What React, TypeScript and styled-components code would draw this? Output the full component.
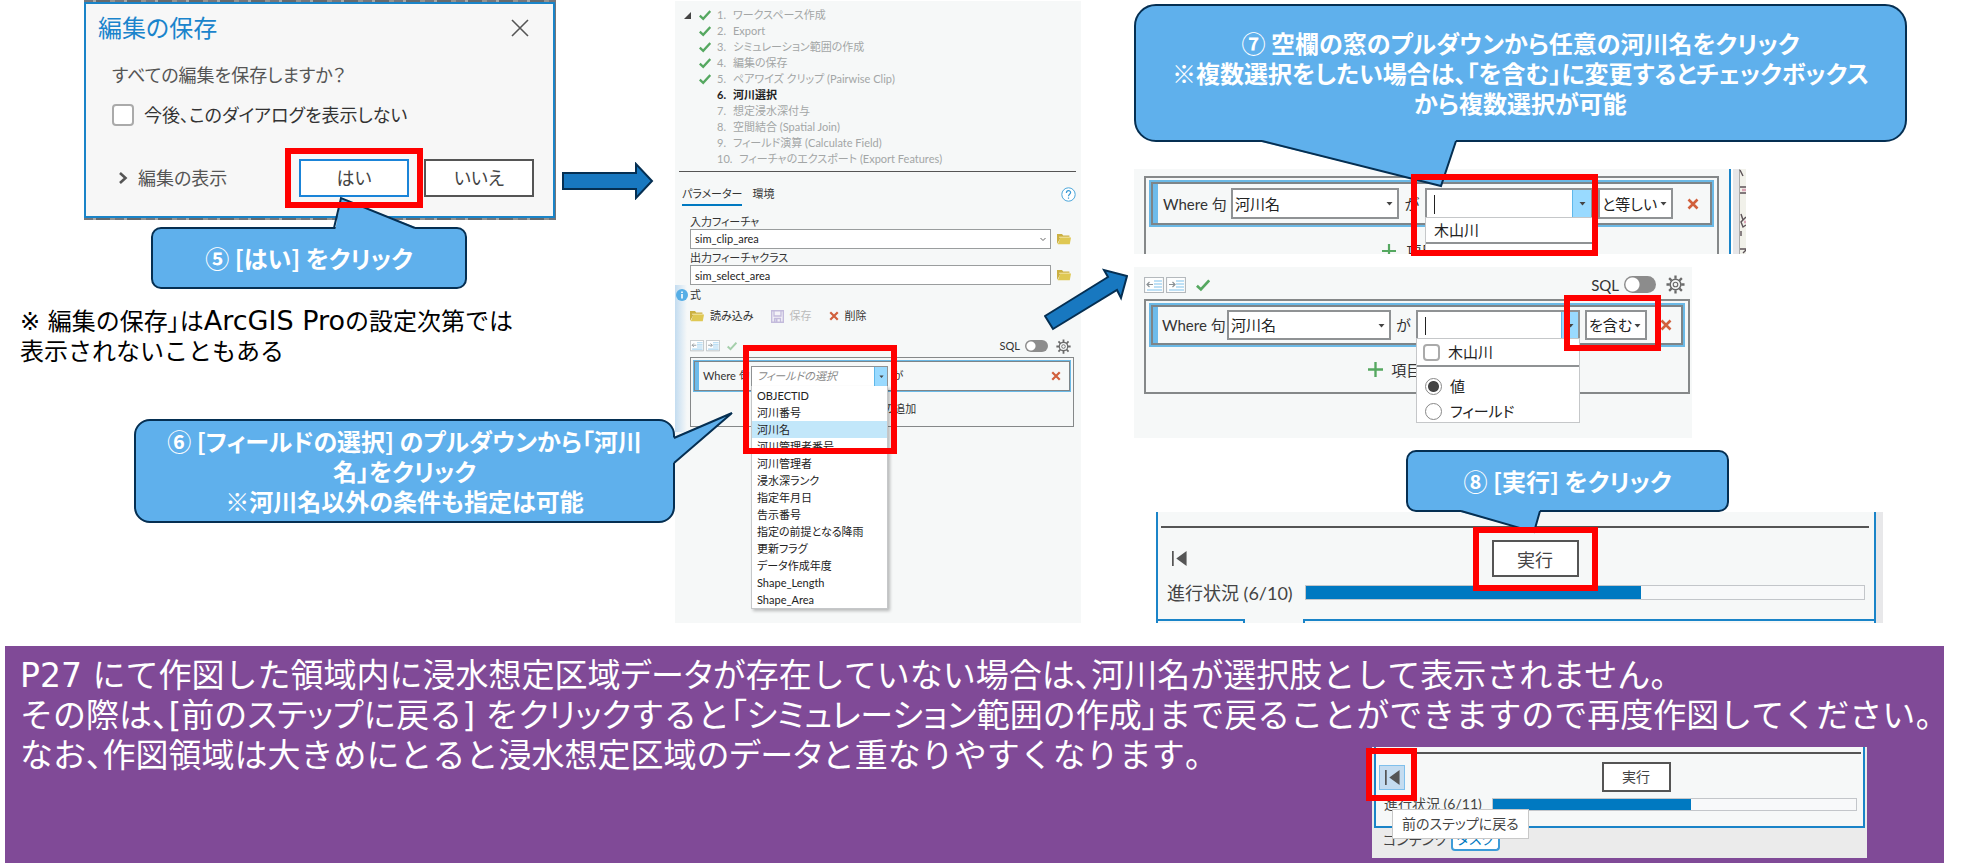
import React from "react";
import styled, { createGlobalStyle, css } from "styled-components";

const color = {
  callout: "#5fb0ec",
  navy: "#052f52",
  arrow: "#1878c0",
  red: "#ff0000",
  accent: "#0079c1",
  edge: "#1a84c8",
  panel: "#f6f8f8",
  purple: "#804a97",
  orange: "#d1603d",
  green: "#55a860",
};

const GlobalStyle = createGlobalStyle`
  *, *::before, *::after { box-sizing: border-box; }
  body {
    margin: 0;
    background: #fff;
    color: #333;
    font-family: Lato, "Noto Sans CJK JP", sans-serif;
    font-feature-settings: "palt";
  }
  button, input, select { font: inherit; font-feature-settings: inherit; color: inherit; margin: 0; border-radius: 0; }
  p, ol, ul, h2 { margin: 0; padding: 0; font-weight: 400; }
  ol, ul { list-style: none; }
`;

/* ---------- slide ---------- */

const Slide = styled.main`
  display: flex;
  flex-direction: column;
  min-height: 100vh;
  overflow: hidden;
`;

const Columns = styled.div`
  display: grid;
  grid-template-columns: minmax(0, 675fr) minmax(0, 406fr) minmax(0, 880fr);
  margin-bottom: 23px;
`;

const LeftColumn = styled.section`
  display: flex;
  flex-direction: column;
`;

const RightColumn = styled.section`
  display: flex;
  flex-direction: column;
  padding: 4px 0 0 53px;
`;

/* ---------- annotations ---------- */

const Highlight = styled.span<{ $inset: string }>`
  position: absolute;
  inset: ${(p) => p.$inset};
  border: 6px solid ${color.red};
  z-index: 3;
  pointer-events: none;
`;

const CalloutBox = styled.div<{ $pad: number; $radius: number; $margin: string }>`
  position: relative;
  z-index: 2;
  margin: ${(p) => p.$margin};
  padding: ${(p) => p.$pad}px 8px;
  border: 2px solid ${color.navy};
  border-radius: ${(p) => p.$radius}px;
  background: ${color.callout};
  color: #fff;
  font-family: "Noto Sans CJK JP", sans-serif;
  font-size: 24px;
  font-weight: 700;
  line-height: 30px;
  text-align: center;
  white-space: nowrap;
`;

const TailSvg = styled.svg<{ $top: number; $left?: number; $right?: number }>`
  position: absolute;
  top: ${(p) => p.$top}px;
  ${(p) => (p.$left !== undefined ? `left: ${p.$left}px;` : `right: ${p.$right}px;`)}
  overflow: visible;
`;

interface TailProps {
  width: number;
  height: number;
  top: number;
  left?: number;
  right?: number;
  fill: string;
  edge: string;
}

const Tail = ({ width, height, top, left, right, fill, edge }: TailProps) => (
  <TailSvg width={width} height={height} $top={top} $left={left} $right={right} aria-hidden>
    <polygon points={fill} fill={color.callout} />
    <polyline points={edge} fill="none" stroke={color.navy} strokeWidth="2" />
  </TailSvg>
);

const RightArrow = styled.svg`
  flex: none;
  margin: 162px 0 0 6px;
`;

const DiagonalArrow = styled.svg`
  position: absolute;
  right: -47px;
  top: 266px;
  z-index: 2;
`;

/* ---------- prose: full-width kana, proportional katakana and punctuation ---------- */

const Full = styled.span`
  font-feature-settings: "palt" 0;
`;

const Tight = styled.span`
  font-feature-settings: "palt";
`;

const Prose = ({ children }: { children: string }) => (
  <Full>
    {children
      .split(/([ァ-ヿ、。「」]+)/)
      .map((part, i) => (i % 2 ? <Tight key={i}>{part}</Tight> : part))}
  </Full>
);

/* ---------- icons ---------- */

const Check = ({ size = 12, tone = color.green }: { size?: number; tone?: string }) => (
  <svg width={size} height={size} viewBox="0 0 12 12" aria-hidden>
    <path d="M.8 6.6 4.2 9.8 11.3 2" fill="none" stroke={tone} strokeWidth="2.3" />
  </svg>
);

const Cross = ({ size }: { size: number }) => (
  <svg width={size} height={size} viewBox="0 0 12 12" aria-hidden>
    <path d="M1.5 1.5 10.5 10.5M10.5 1.5 1.5 10.5" stroke={color.orange} strokeWidth="2.6" />
  </svg>
);

const Plus = ({ size }: { size: number }) => (
  <svg width={size} height={size} viewBox="0 0 14 14" aria-hidden>
    <path d="M7 0V14M0 7H14" stroke={color.green} strokeWidth="2.2" />
  </svg>
);

const Folder = () => (
  <svg width="14" height="12" viewBox="0 0 14 12" aria-hidden>
    <path d="M0 11V1H5L6.2 2.5H12.4V5H3.5Z" fill="#cbb042" />
    <path d="M.8 11.3 3.4 4.6H14L12.8 11.3Z" fill="#dfc853" />
    <path d="M2 4.2H12.4" stroke="#fff6c8" strokeWidth=".8" />
  </svg>
);

const Floppy = () => (
  <svg width="13" height="13" viewBox="0 0 13 13" aria-hidden>
    <path d="M.7.7H12.3V12.3H.7Z" fill="#f4f2f8" stroke="#c3bbdc" strokeWidth="1.4" />
    <path d="M3 1V6H10V1M3.5 12V8.5H9.5V12" fill="none" stroke="#c3bbdc" strokeWidth="1.3" />
    <path d="M4.5 9H6.5V12H4.5Z" fill="#c3bbdc" />
  </svg>
);

const Gear = ({ size }: { size: number }) => (
  <svg width={size} height={size} viewBox="0 0 20 20" aria-hidden>
    <g stroke="#6a6a6a" fill="none">
      <circle cx="10" cy="10" r="5.6" strokeWidth="1.6" />
      <circle cx="10" cy="10" r="2.4" strokeWidth="1.2" />
      <path
        strokeWidth="2.4"
        d="M10 .5V4M10 16V19.5M.5 10H4M16 10H19.5M3.3 3.3 5.7 5.7M14.3 14.3 16.7 16.7M16.7 3.3 14.3 5.7M5.7 14.3 3.3 16.7"
      />
    </g>
  </svg>
);

const IndentIcon = ({ size, dir }: { size: number; dir: "in" | "out" }) => (
  <svg width={size} height={(size * 4) / 5} viewBox="0 0 20 16" aria-hidden>
    <path d="M.5.5H19.5V15.5H.5Z" fill="#fdfefe" stroke="#b4b9bd" strokeWidth="1.2" />
    <path d="M10 4H18M10 7H18M10 10H18M3 13H18" stroke="#a9d6f2" strokeWidth="1.6" />
    <path
      d={dir === "out" ? "M9 7.5H3M5.5 5 3 7.5 5.5 10" : "M3 7.5H9M6.5 5 9 7.5 6.5 10"}
      fill="none"
      stroke="#8a9094"
      strokeWidth="1.2"
    />
  </svg>
);

const Caret = ({ size = 7 }: { size?: number }) => (
  <svg width={size} height={size} viewBox="0 0 7 7" aria-hidden>
    <path d="M.5 2H6.5L3.5 5.5Z" fill="#444" />
  </svg>
);

const StepBack = () => (
  <svg width="15" height="15" viewBox="0 0 14 14" aria-hidden>
    <path d="M0 0H1.6V14H0ZM13.6 0V14L4 7Z" fill="#555" />
  </svg>
);

/* ---------- shared controls ---------- */

const Plain = styled.button`
  display: inline-flex;
  align-items: center;
  padding: 0;
  border: 0;
  background: none;
`;

const PushButton = styled.button<{ $w: number; $h: number; $blue?: boolean }>`
  width: ${(p) => p.$w}px;
  height: ${(p) => p.$h}px;
  padding: 0;
  border: ${(p) => (p.$blue ? "2px solid #1a84d8" : "2px solid #555")};
  background: #fff;
  color: #444;
`;

const Anchor = styled.div`
  position: relative;
  display: flex;
`;

const SelectWrap = styled.div<{ $w?: number; $h: number }>`
  position: relative;
  display: flex;
  align-items: center;
  height: ${(p) => p.$h}px;
  ${(p) => (p.$w ? `flex: none; width: ${p.$w}px;` : "flex: 1 1 0; min-width: 0;")}
  border: 2px solid #8f9294;
  background: #fff;

  > select {
    appearance: none;
    flex: 1;
    min-width: 0;
    height: 100%;
    padding: 0 0 0 2px;
    border: 0;
    background: none;
    color: #222;
  }
  > svg { position: absolute; right: 4px; pointer-events: none; }
`;

const Combo = styled.div<{ $w?: number; $h: number; $line: number }>`
  position: relative;
  display: flex;
  height: ${(p) => p.$h}px;
  ${(p) => (p.$w ? `flex: none; width: ${p.$w}px;` : "flex: 1 1 0; min-width: 0;")}
  border: ${(p) => p.$line}px solid #8f9294;
  background: #fff;

  > input {
    flex: 1;
    min-width: 0;
    padding: 0 5px;
    border: 0;
    background: none;
    outline: 0;
  }
  > input::placeholder { color: #8a8a8a; font-style: italic; opacity: 1; }
`;

const ComboArrow = styled.button<{ $w: number }>`
  display: flex;
  align-items: center;
  justify-content: center;
  width: ${(p) => p.$w}px;
  padding: 0;
  border: 0;
  border-left: 1px solid #5fb8ea;
  background: #99daff;
`;

const TextCursor = styled.span`
  position: absolute;
  left: 7px;
  top: 5px;
  bottom: 3px;
  width: 1px;
  background: #222;
`;

const Switch = styled.input<{ $w: number; $h: number }>`
  appearance: none;
  width: ${(p) => p.$w}px;
  height: ${(p) => p.$h}px;
  border-radius: ${(p) => p.$h}px !important;
  background: radial-gradient(
    circle at ${(p) => p.$h / 2}px 50%,
    #fff ${(p) => p.$h / 2 - 2}px,
    #8c8c8c ${(p) => p.$h / 2 - 1}px
  );
`;

const ToolRow = styled.div<{ $h: number; $margin: string }>`
  display: flex;
  align-items: center;
  height: ${(p) => p.$h}px;
  margin: ${(p) => p.$margin};
  gap: 2px;
`;

const ToolEnd = styled.div<{ $gap: number }>`
  display: flex;
  align-items: center;
  gap: ${(p) => p.$gap}px;
  margin-left: auto;

  label { display: flex; align-items: center; gap: 5px; }
`;

const CheckTool = styled(Plain)<{ $left: number; $dim?: boolean }>`
  margin-left: ${(p) => p.$left}px;
  opacity: ${(p) => (p.$dim ? 0.5 : 1)};
`;

/* ---------- query builder ---------- */

const Frame = styled.div<{ $line: number; $margin: string; $open?: boolean }>`
  margin: ${(p) => p.$margin};
  padding: 2px ${(p) => p.$line + 1}px 0;
  border: ${(p) => p.$line}px solid #858889;
  ${(p) => p.$open && "border-bottom: 0;"}
`;

const Clause = styled.div<{ $h: number; $line: number }>`
  display: flex;
  align-items: center;
  height: ${(p) => p.$h}px;
  border: ${(p) => p.$line}px solid #6bb9e6;
  box-shadow: inset 0 0 0 ${(p) => p.$line}px #7d8589;
  background: linear-gradient(to right, #6dbbeb ${(p) => p.$line * 2 + 3}px, transparent 0);
`;

const ClauseLabel = styled.span<{ $w: number; $pad: number }>`
  flex: none;
  width: ${(p) => p.$w}px;
  padding-left: ${(p) => p.$pad}px;
  white-space: nowrap;
`;

const Particle = styled.span<{ $w: number }>`
  flex: none;
  width: ${(p) => p.$w}px;
  text-align: center;
`;

const RelationGap = styled.span`
  flex: none;
  width: 5px;
`;

const RemoveButton = styled(Plain)<{ $margin: string }>`
  flex: none;
  margin: ${(p) => p.$margin};
`;

const AddRow = styled.div<{ $h: number; $pad?: number }>`
  display: flex;
  align-items: center;
  justify-content: center;
  height: ${(p) => p.$h}px;
  padding-top: ${(p) => p.$pad ?? 0}px;
  overflow: hidden;
  white-space: nowrap;
`;

const AddButton = styled(Plain)<{ $gap: number }>`
  gap: ${(p) => p.$gap}px;
  white-space: nowrap;
`;

/* ---------- save dialog ---------- */

const DialogRow = styled.div`
  display: flex;
  padding: 0 21px 0 84px;
`;

const DialogBackdrop = styled.div`
  flex: 1;
  min-width: 0;
  padding: 2px 1px 2px 0;
  background: repeating-linear-gradient(to right, #75767a 0 9px, #a9a7a4 9px 12px, #66696c 12px 26px, #96938f 26px 31px);
`;

const Dialog = styled.div`
  height: 216px;
  padding: 0 19px 0 12px;
  border: 2px solid ${color.edge};
  background: #f7f7f7;
  color: #555;
  font-size: 18px;
  line-height: 24px;
`;

const DialogHead = styled.div`
  display: flex;
  justify-content: space-between;
  align-items: center;
  height: 48px;
  padding-right: 5px;

  h2 { font-size: 24px; color: #1a84cc; }
`;

const DialogBody = styled.div`
  padding: 11px 0 0 14px;
`;

const CheckLabel = styled.label`
  display: flex;
  align-items: center;
  gap: 10px;
  margin-top: 16px;
  color: #333;
`;

const Tick = styled.input<{ $size: number }>`
  appearance: none;
  width: ${(p) => p.$size}px;
  height: ${(p) => p.$size}px;
  border: 2px solid #aaa;
  border-radius: 4px !important;
  background: #fff;
`;

const Radio = styled.input`
  appearance: none;
  width: 17px;
  height: 17px;
  border: 1px solid #888;
  border-radius: 50% !important;
  background: #fff;
  &:checked { background: radial-gradient(circle, #444 5px, #fff 6px); }
`;

const DialogFoot = styled.div`
  display: flex;
  align-items: center;
  gap: 15px;
  margin-top: 32px;
`;

const Expander = styled(Plain)`
  gap: 10px;
  margin: 0 auto 0 20px;
  color: #555;
`;

const Note = styled.p`
  margin: 18px 0 52px 20px;
  font-family: "DejaVu Sans", "Noto Sans CJK JP", sans-serif;
  font-size: 24px;
  line-height: 30px;
  color: #000;
  white-space: nowrap;
`;

const ProductName = styled.span`
  font-size: 27px;
  line-height: 24px;
`;

/* ---------- task panel ---------- */

const TaskPanel = styled.section`
  position: relative;
  margin-top: 1px;
  height: 622px;
  background: ${color.panel};
  font-size: 11px;
  line-height: 14px;
  color: #333;
`;

const Steps = styled.ol`
  padding: 6px 9px 0;
`;

const Step = styled.li<{ $state: "done" | "now" | "next" }>`
  display: flex;
  align-items: center;
  height: 16px;
  color: ${(p) => (p.$state === "now" ? "#222" : "#a3a6a6")};
  font-weight: ${(p) => (p.$state === "now" ? 700 : 400)};

  > span:first-child { display: flex; width: 15px; }
  > span:nth-child(2) { display: flex; width: 18px; }
  > b { font-weight: inherit; margin-right: 7px; }
`;

const Rule = styled.hr<{ $h: number; $margin: string }>`
  height: ${(p) => p.$h}px;
  margin: ${(p) => p.$margin};
  border: 0;
  background: #555;
`;

const TabBar = styled.div`
  display: flex;
  gap: 10px;
  margin: 12px 5px 9px 7px;

  svg { margin: 3px 0 0 auto; }
`;

const Tab = styled(Plain)<{ $on?: boolean }>`
  line-height: 20px;
  border-bottom: 2px solid ${(p) => (p.$on ? color.accent : "transparent")};
`;

const Field = styled.div`
  margin: 0 10px 2px 15px;
  > label { display: block; }
`;

const FieldRow = styled.div`
  display: flex;
  align-items: center;
  gap: 6px;
`;

const fieldBox = css`
  flex: 1;
  min-width: 0;
  height: 20px;
  padding: 0 4px;
  border: 1px solid #9a9d9e;
  background: #fff;
  color: #222;
`;

const FieldInput = styled.input`${fieldBox}`;

const FieldSelect = styled.div`
  position: relative;
  display: flex;
  align-items: center;
  flex: 1;
  > select { ${fieldBox} appearance: none; }
  > svg { position: absolute; right: 5px; pointer-events: none; }
`;

const Expression = styled.div`
  position: relative;
  margin-top: -2px;
  padding: 3px 7px 5px 15px;
  background: linear-gradient(to right, #c3dcf0, transparent 12px);
`;

const InfoIcon = styled.svg`
  position: absolute;
  left: 1px;
  top: 4px;
`;

const FileTools = styled.div`
  display: flex;
  align-items: center;
  gap: 17px;
  height: 16px;
  margin-top: 6px;

  button { gap: 6px; }
  button:disabled { color: #bbb; }
`;

const OptionList = styled.ul`
  position: absolute;
  z-index: 1;
  top: 100%;
  left: -1px;
  right: -1px;
  padding-top: 1px;
  border: 1px solid #c5c7c9;
  border-top: 0;
  background: #fff;
  box-shadow: 2px 2px 3px rgba(0, 0, 0, 0.25);
`;

const Option = styled.li<{ $on?: boolean }>`
  height: 17px;
  padding-left: 5px;
  line-height: 17px;
  color: #222;
  background: ${(p) => (p.$on ? "#c2e7fa" : "transparent")};
`;

/* ---------- right side panels ---------- */

const EqualsShot = styled.div`
  display: flex;
  margin: 27px 215px 13px 0;
  height: 85px;
  background: ${color.panel};
  font-size: 15px;
  line-height: 18px;
`;

const ShotMain = styled.div`
  flex: 1;
  min-width: 0;
  padding: 7px 10px 0 10px;
  border-right: 2px solid ${color.edge};
`;

const MapEdge = styled.div`
  width: 15px;
  overflow: hidden;
  background: linear-gradient(to right, #fff 2px, #e6e6e8 2px 8px, #aaa 8px 9px, #f1f1ea 9px);
`;

const MapInk = () => (
  <svg width="15" height="85" viewBox="0 0 15 85" aria-hidden>
    <g fill="none" stroke="#5c5257" strokeWidth="1.4">
      <path d="M9 1 12 7M9 18H15M9 24H15M10 45 12 51M15 48 10 53 12 58 15 56M10 62V67M9 80H15M12 84 15 81" />
      <path d="M11 21H15M13 53H15" stroke="#d9a3b4" strokeWidth="2.4" />
    </g>
  </svg>
);

const ContainsShot = styled.div`
  margin: 0 269px 12px 0;
  padding: 9px 0 44px;
  background: ${color.panel};
  font-size: 15px;
  line-height: 18px;
`;

const Popup = styled.div<{ $h: number }>`
  position: absolute;
  z-index: 1;
  top: 100%;
  left: -2px;
  right: -2px;
  height: ${(p) => p.$h}px;
  border: 1px solid #c5c7c9;
  background: #fff;
  color: #222;
`;

const PopupItem = styled.div<{ $h: number; $pad: number }>`
  display: flex;
  align-items: center;
  height: ${(p) => p.$h}px;
  padding-left: ${(p) => p.$pad}px;
  border-bottom: 2px solid #8f9294;
`;

const PopupLabel = styled.label`
  display: flex;
  align-items: center;
  gap: 8px;
`;

const RadioGroup = styled.div`
  display: flex;
  flex-direction: column;
  gap: 7px;
  padding: 10px 0 0 8px;
`;

/* ---------- run panels ---------- */

const RunShot = styled.div`
  display: flex;
  margin: 0 78px 0 22px;
  height: 111px;
  border-right: 7px solid #e8e8ea;
  background: ${color.panel};
  font-size: 18px;
`;

const RunBody = styled.div<{ $pad: number }>`
  display: flex;
  flex-direction: column;
  flex: 1;
  min-width: 0;
  padding-top: ${(p) => p.$pad}px;
  border: 2px solid ${color.edge};
  border-width: 0 2px;
`;

const RunRow = styled.div<{ $h: number; $margin: string }>`
  display: flex;
  align-items: center;
  height: ${(p) => p.$h}px;
  margin: ${(p) => p.$margin};
`;

const RunCenter = styled.div`
  display: flex;
  justify-content: center;
  flex: 1;
  padding-left: 4px;
`;

const BackButton = styled.button<{ $hot?: boolean }>`
  position: relative;
  display: flex;
  align-items: center;
  justify-content: center;
  width: 26px;
  height: 25px;
  padding: 0;
  border: ${(p) => (p.$hot ? "1px solid #7fc0ec" : "0")};
  background: ${(p) => (p.$hot ? "#c4dcf0" : "none")};
`;

const ProgressRow = styled.label<{ $h: number; $margin: string; $w: number }>`
  display: flex;
  align-items: center;
  height: ${(p) => p.$h}px;
  margin: ${(p) => p.$margin};
  color: #444;
  white-space: nowrap;
  > span { flex: none; width: ${(p) => p.$w}px; }
`;

const Progress = styled.progress<{ $h: number }>`
  appearance: none;
  flex: 1;
  min-width: 0;
  height: ${(p) => p.$h}px;
  border: 1px solid #c3c6ca;
  background: #f8f9fa;
  &::-webkit-progress-bar { background: #f8f9fa; }
  &::-webkit-progress-value { background: ${color.accent}; }
`;

const TabStubs = styled.div`
  display: flex;
  justify-content: space-between;
  height: 4px;
  margin-top: auto;

  > i { border-top: 2px solid ${color.edge}; }
  > i:first-child { width: 87px; border-right: 2px solid ${color.edge}; }
  > i:last-child { flex: 1; margin-left: 58px; border-left: 2px solid ${color.edge}; }
`;

/* ---------- purple notice ---------- */

const Notice = styled.section`
  flex: 1;
  margin: 0 17px 0 5px;
  padding: 10px 0 0 15px;
  background: ${color.purple};
  color: #fff;
  font-family: "DejaVu Sans", "Noto Sans CJK JP", sans-serif;
  font-size: 33px;
  font-weight: 300;
  line-height: 40px;
  white-space: nowrap;
`;

const NoticeRow = styled.div`
  display: flex;
  justify-content: space-between;
  align-items: flex-start;
`;

const BackShot = styled.div`
  width: 495px;
  margin: 11px 77px 4px 0;
  background: #ebebeb;
  color: #444;
  font-family: Lato, "Noto Sans CJK JP", sans-serif;
  font-size: 14px;
  font-weight: 400;
  line-height: 18px;
`;

const BackPane = styled.div`
  height: 81px;
  margin: 0 2px;
  padding-top: 5px;
  border: 2px solid ${color.edge};
  border-top: 0;
  background: ${color.panel};
`;

const Tooltip = styled.span`
  position: absolute;
  z-index: 2;
  top: 43px;
  left: 12px;
  padding: 5px 9px;
  border: 1px solid #c8c8c8;
  background: #fff;
  white-space: nowrap;
  line-height: 18px;
`;

const PaneTabs = styled.div`
  display: flex;
  align-items: flex-start;
  gap: 4px;
  height: 30px;
  padding-left: 11px;
`;

const PaneTab = styled(Plain)<{ $on?: boolean }>`
  height: 23px;
  ${(p) =>
    p.$on &&
    `padding: 0 4px; border: 2px solid #3c9bd8; border-top: 0; border-radius: 0 0 4px 4px; background: #fff; color: ${color.accent};`}
`;

/* ---------- data ---------- */

const steps = [
  "ワークスペース作成",
  "Export",
  "シミュレーション範囲の作成",
  "編集の保存",
  "ペアワイズ クリップ (Pairwise Clip)",
  "河川選択",
  "想定浸水深付与",
  "空間結合 (Spatial Join)",
  "フィールド演算 (Calculate Field)",
  "フィーチャのエクスポート (Export Features)",
];
const currentStep = 6;

const fields = [
  "OBJECTID",
  "河川番号",
  "河川名",
  "河川管理者番号",
  "河川管理者",
  "浸水深ランク",
  "指定年月日",
  "告示番号",
  "指定の前提となる降雨",
  "更新フラグ",
  "データ作成年度",
  "Shape_Length",
  "Shape_Area",
];

/* ---------- sections ---------- */

const SaveDialog = () => (
  <DialogRow>
    <DialogBackdrop>
      <Dialog role="dialog" aria-label="編集の保存">
        <DialogHead>
          <h2>編集の保存</h2>
          <Plain aria-label="閉じる">
            <svg width="18" height="18" viewBox="0 0 18 18" aria-hidden>
              <path d="M1 1 17 17M17 1 1 17" stroke="#555" strokeWidth="1.6" />
            </svg>
          </Plain>
        </DialogHead>
        <DialogBody>
          <p>すべての編集を保存しますか？</p>
          <CheckLabel>
            <Tick type="checkbox" $size={22} />
            今後、このダイアログを表示しない
          </CheckLabel>
        </DialogBody>
        <DialogFoot>
          <Expander>
            <svg width="10" height="14" viewBox="0 0 10 14" aria-hidden>
              <path d="M2 2 7.5 7 2 12" fill="none" stroke="#555" strokeWidth="2.6" />
            </svg>
            編集の表示
          </Expander>
          <Anchor>
            <PushButton $w={110} $h={38} $blue>はい</PushButton>
            <Highlight $inset="-11px -14px -11px -14px" />
          </Anchor>
          <PushButton $w={110} $h={38}>いいえ</PushButton>
        </DialogFoot>
      </Dialog>
    </DialogBackdrop>
    <RightArrow width="92" height="38" viewBox="0 0 92 38" aria-hidden>
      <path d="M1 11H74V2L90 19 74 36V27H1Z" fill={color.arrow} stroke={color.navy} strokeWidth="2" />
    </RightArrow>
  </DialogRow>
);

const Task = () => (
  <TaskPanel>
    <Steps>
      {steps.map((name, i) => {
        const n = i + 1;
        const state = n < currentStep ? "done" : n === currentStep ? "now" : "next";
        return (
          <Step key={name} $state={state}>
            <span>
              {i === 0 && (
                <svg width="7" height="7" viewBox="0 0 7 7" aria-hidden>
                  <path d="M7 0V7H0Z" fill="#444" />
                </svg>
              )}
            </span>
            <span>{state === "done" && <Check />}</span>
            <b>{n}.</b>
            {name}
          </Step>
        );
      })}
    </Steps>
    <Rule $h={1} $margin="4px 5px 0 4px" />
    <TabBar>
      <Tab $on>パラメーター</Tab>
      <Tab>環境</Tab>
      <svg width="15" height="15" viewBox="0 0 15 15" aria-hidden>
        <circle cx="7.5" cy="7.5" r="6.7" fill="#fff" stroke="#4ba6da" />
        <path d="M5.4 6C5.4 3 9.6 3 9.6 5.6 9.6 7.3 7.5 7.2 7.5 9.2M7.5 10.4V11.8" fill="none" stroke="#3a9ad4" strokeWidth="1.2" />
      </svg>
    </TabBar>
    <Field>
      <label htmlFor="in-feature">入力フィーチャ</label>
      <FieldRow>
        <FieldSelect>
          <select id="in-feature">
            <option>sim_clip_area</option>
          </select>
          <svg width="6" height="5" viewBox="0 0 6 5" aria-hidden>
            <path d="M.5 1 3 3.5 5.5 1" fill="none" stroke="#666" />
          </svg>
        </FieldSelect>
        <Plain aria-label="参照"><Folder /></Plain>
      </FieldRow>
    </Field>
    <Field>
      <label htmlFor="out-class">出力フィーチャクラス</label>
      <FieldRow>
        <FieldInput id="out-class" defaultValue="sim_select_area" />
        <Plain aria-label="参照"><Folder /></Plain>
      </FieldRow>
    </Field>
    <Expression>
      <InfoIcon width="12" height="12" viewBox="0 0 12 12" aria-hidden>
        <circle cx="6" cy="6" r="6" fill="#56aee6" />
        <path d="M6 2.4V4M6 5V9.6" stroke="#fff" strokeWidth="1.6" />
      </InfoIcon>
      <p>式</p>
      <FileTools>
        <Plain><Folder />読み込み</Plain>
        <Plain disabled><Floppy />保存</Plain>
        <Plain><Cross size={10} />削除</Plain>
      </FileTools>
      <ToolRow $h={16} $margin="14px 3px 0 0">
        <IndentIcon size={14} dir="out" />
        <IndentIcon size={14} dir="in" />
        <CheckTool $left={5} $dim aria-label="検証"><Check size={10} /></CheckTool>
        <ToolEnd $gap={8}>
          <label>SQL<Switch type="checkbox" role="switch" $w={23} $h={12} /></label>
          <Plain aria-label="設定"><Gear size={15} /></Plain>
        </ToolEnd>
      </ToolRow>
      <Frame $line={1} $margin="3px 0 0">
        <Clause $h={32} $line={1}>
          <ClauseLabel $w={57} $pad={9}>Where 句</ClauseLabel>
          <Combo $w={137} $h={21} $line={1}>
            <input placeholder="フィールドの選択" aria-label="フィールド" />
            <ComboArrow $w={13} aria-label="一覧を開く"><Caret size={5} /></ComboArrow>
            <OptionList role="listbox">
              {fields.map((f) => (
                <Option key={f} role="option" aria-selected={f === "河川名"} $on={f === "河川名"}>
                  {f}
                </Option>
              ))}
            </OptionList>
            <Highlight $inset="-22px -10px -68px -9px" />
          </Combo>
          <Particle $w={20}>が</Particle>
          <RemoveButton $margin="0 9px 0 auto" aria-label="削除"><Cross size={10} /></RemoveButton>
        </Clause>
        <AddRow $h={34}>
          <AddButton $gap={5}><Plus size={9} />項目の追加</AddButton>
        </AddRow>
      </Frame>
    </Expression>
    <DiagonalArrow width="84" height="66" viewBox="0 0 84 66" aria-hidden>
      <path d="M1 49 64 10 60 3 83 9 77 31 73 23 9 62Z" fill={color.arrow} stroke={color.navy} strokeWidth="2" />
    </DiagonalArrow>
  </TaskPanel>
);

const EqualsPanel = () => (
  <EqualsShot>
    <ShotMain>
      <Frame $line={2} $margin="0" $open>
        <Clause $h={47} $line={2}>
          <ClauseLabel $w={80} $pad={12}>Where 句</ClauseLabel>
          <SelectWrap $h={31}>
            <select aria-label="フィールド"><option>河川名</option></select>
            <Caret />
          </SelectWrap>
          <Particle $w={26}>が</Particle>
          <Combo $h={31} $line={2}>
            <input aria-label="値" />
            <TextCursor />
            <ComboArrow $w={19} aria-label="一覧を開く"><Caret /></ComboArrow>
            <Popup $h={34}>
              <PopupItem $h={26} $pad={8}>木山川</PopupItem>
            </Popup>
            <Highlight $inset="-16px -7px -39px -16px" />
          </Combo>
          <RelationGap />
          <SelectWrap $h={31} $w={75}>
            <select aria-label="条件"><option>と等しい</option></select>
            <Caret />
          </SelectWrap>
          <RemoveButton $margin="0 13px 0 14px" aria-label="削除"><Cross size={12} /></RemoveButton>
        </Clause>
        <AddRow $h={27} $pad={20}>
          <AddButton $gap={10}><Plus size={14} />項目の追加</AddButton>
        </AddRow>
      </Frame>
    </ShotMain>
    <MapEdge><MapInk /></MapEdge>
  </EqualsShot>
);

const ContainsPanel = () => (
  <ContainsShot>
    <ToolRow $h={17} $margin="0 7px 6px 10px">
      <IndentIcon size={20} dir="out" />
      <IndentIcon size={20} dir="in" />
      <CheckTool $left={8} aria-label="検証"><Check size={14} /></CheckTool>
      <ToolEnd $gap={10}>
        <label>SQL<Switch type="checkbox" role="switch" $w={32} $h={17} /></label>
        <Plain aria-label="設定"><Gear size={19} /></Plain>
      </ToolEnd>
    </ToolRow>
    <Frame $line={2} $margin="0 2px 0 10px">
      <Clause $h={44} $line={2}>
        <ClauseLabel $w={76} $pad={11}>Where 句</ClauseLabel>
        <SelectWrap $h={30}>
          <select aria-label="フィールド"><option>河川名</option></select>
          <Caret />
        </SelectWrap>
        <Particle $w={25}>が</Particle>
        <Combo $h={30} $line={2}>
          <input aria-label="値" />
          <TextCursor />
          <ComboArrow $w={17} aria-label="一覧を開く"><Caret /></ComboArrow>
          <Popup $h={85}>
            <PopupItem $h={28} $pad={6}>
              <PopupLabel>
                <Tick type="checkbox" $size={17} />
                木山川
              </PopupLabel>
            </PopupItem>
            <RadioGroup>
              <PopupLabel><Radio type="radio" name="kind" defaultChecked />値</PopupLabel>
              <PopupLabel><Radio type="radio" name="kind" />フィールド</PopupLabel>
            </RadioGroup>
          </Popup>
        </Combo>
        <RelationGap />
        <SelectWrap $h={30} $w={62}>
          <select aria-label="条件"><option>を含む</option></select>
          <Caret />
          <Highlight $inset="-17px -16px -13px -23px" />
        </SelectWrap>
        <RemoveButton $margin="0 11px 0 13px" aria-label="削除"><Cross size={12} /></RemoveButton>
      </Clause>
      <AddRow $h={45}>
        <AddButton $gap={8}><Plus size={15} />項目の追加</AddButton>
      </AddRow>
    </Frame>
  </ContainsShot>
);

const RunPanel = () => (
  <RunShot>
    <RunBody $pad={14}>
      <Rule $h={2} $margin="0 5px 0 3px" />
      <RunRow $h={37} $margin="12px 0 5px 8px">
        <BackButton aria-label="前のステップに戻る"><StepBack /></BackButton>
        <RunCenter>
          <Anchor>
            <PushButton $w={87} $h={37}>実行</PushButton>
            <Highlight $inset="-13px -19px -14px -19px" />
          </Anchor>
        </RunCenter>
      </RunRow>
      <ProgressRow $h={20} $margin="0 9px" $w={138}>
        <span>進行状況 (6/10)</span>
        <Progress $h={15} max={10} value={6} />
      </ProgressRow>
      <TabStubs><i /><i /></TabStubs>
    </RunBody>
  </RunShot>
);

const BackPanel = () => (
  <BackShot>
    <BackPane>
      <Rule $h={2} $margin="0 2px 0 0" />
      <RunRow $h={30} $margin="8px 0 3px 3px">
        <BackButton $hot aria-label="前のステップに戻る">
          <StepBack />
          <Tooltip role="tooltip">前のステップに戻る</Tooltip>
          <Highlight $inset="-18px -13px -12px -14px" />
        </BackButton>
        <RunCenter>
          <PushButton $w={69} $h={30}>実行</PushButton>
        </RunCenter>
      </RunRow>
      <ProgressRow $h={18} $margin="0 6px 0 8px" $w={108}>
        <span>進行状況 (6/11)</span>
        <Progress $h={13} max={11} value={6} />
      </ProgressRow>
    </BackPane>
    <PaneTabs>
      <PaneTab>コンテンツ</PaneTab>
      <PaneTab $on>タスク</PaneTab>
    </PaneTabs>
  </BackShot>
);

export default function App() {
  return (
    <>
      <GlobalStyle />
      <Slide>
        <Columns>
          <LeftColumn>
            <SaveDialog />
            <CalloutBox $pad={14} $radius={10} $margin="7px 208px 0 151px">
              <Tail
                width={84}
                height={34}
                top={-32}
                left={182}
                fill="0,34 6,1 80,30 80,34"
                edge="-1,31 6,1 80,31"
              />
              ⑤ [はい] をクリック
            </CalloutBox>
            <Note>
              <Prose>※ 編集の保存」は</Prose>
              <ProductName>ArcGIS Pro</ProductName>
              <Prose>の設定次第では</Prose>
              <br />
              <Prose>表示されないこともある</Prose>
            </Note>
            <CalloutBox $pad={5} $radius={16} $margin="0 0 0 134px">
              <Tail
                width={60}
                height={50}
                top={-9}
                right={-60}
                fill="-1,26 59,1 1,51 -1,51"
                edge="1,26 59,1 1,51"
              />
              ⑥ [フィールドの選択] のプルダウンから「河川
              <br />
              名」をクリック
              <br />
              ※河川名以外の条件も指定は可能
            </CalloutBox>
          </LeftColumn>
          <Task />
          <RightColumn>
            <CalloutBox $pad={22} $radius={22} $margin="0 54px 0 0">
              <Tail
                width={194}
                height={46}
                top={134}
                left={126}
                fill="0,0 0,2 179,46 194,2 194,0"
                edge="0,1 179,46 194,1"
              />
              ⑦ 空欄の窓のプルダウンから任意の河川名をクリック
              <br />
              ※複数選択をしたい場合は、「を含む」に変更するとチェックボックス
              <br />
              から複数選択が可能
            </CalloutBox>
            <EqualsPanel />
            <ContainsPanel />
            <CalloutBox $pad={14} $radius={10} $margin="0 232px 0 272px">
              <Tail
                width={80}
                height={22}
                top={58}
                left={53}
                fill="0,0 0,2 73,22 79,2 79,0"
                edge="0,1 73,22 79,1"
              />
              ⑧ [実行] をクリック
            </CalloutBox>
            <RunPanel />
          </RightColumn>
        </Columns>
        <Notice>
          <p><Prose>P27 にて作図した領域内に浸水想定区域データが存在していない場合は、河川名が選択肢として表示されません。</Prose></p>
          <p><Prose>その際は、[前のステップに戻る] をクリックすると「シミュレーション範囲の作成」まで戻ることができますので再度作図してください。</Prose></p>
          <NoticeRow>
            <p><Prose>なお、作図領域は大きめにとると浸水想定区域のデータと重なりやすくなります。</Prose></p>
            <BackPanel />
          </NoticeRow>
        </Notice>
      </Slide>
    </>
  );
}
